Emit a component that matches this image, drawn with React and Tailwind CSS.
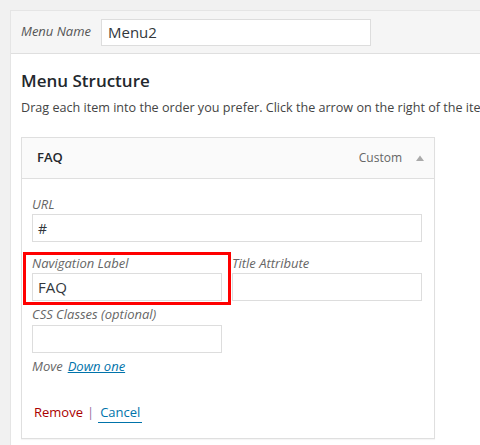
export default function App() {
  const font = { fontFamily: '"Open Sans", "Noto Sans", sans-serif' };
  return (
    <div className="w-[480px] h-[445px] overflow-hidden bg-[#f1f1f1] pt-[10px] pl-[10px]" style={font}>
      <div className="w-[520px] h-[460px] border border-[#e5e5e5] bg-white">
        {/* header */}
        <div className="h-[43px] bg-[#f5f5f5] border-b border-[#dfdfdf] flex items-center pl-[10px]">
          <span className="text-[13px] italic text-[#555] w-[80px]">Menu Name</span>
          <div className="w-[270px] h-[27px] border border-[#ddd] bg-white flex items-center pl-[6px] text-[15px] text-[#32373c]">
            Menu2
          </div>
        </div>
        {/* body */}
        <div className="pl-[10px]">
          <div className="mt-[14px] h-[26px] flex items-center text-[17px] font-semibold text-[#23282d]">Menu Structure</div>
          <div className="mt-[5px] h-[18px] flex items-center text-[12.6px] text-[#444] whitespace-nowrap">
            Drag each item into the order you prefer. Click the arrow on the right of the item to reveal additional configuration options.
          </div>
          {/* item */}
          <div className="mt-[20px] w-[414px] border border-[#dfdfdf] bg-white shadow-[0_1px_1px_rgba(0,0,0,0.04)]">
            <div className="h-[41px] bg-[#fafafa] border-b border-[#dfdfdf] flex items-center pl-[15px] pr-[9px]">
              <span className="text-[13px] font-semibold text-[#23282d]">FAQ</span>
              <span className="ml-auto text-[12px] text-[#666]">Custom</span>
              <svg width="10" height="8" viewBox="0 0 10 8" className="ml-[13px]">
                <path d="M1 7 L5 1.5 L9 7 Z" fill="#aaa" />
              </svg>
            </div>
            <div className="pl-[10px] pr-[12px] pt-[17px] pb-[16px]">
              <div className="h-[18px] flex items-center text-[13px] italic text-[#666]">URL</div>
              <div className="w-[390px] h-[28px] border border-[#ddd] flex items-center pl-[5px] text-[14px] text-[#32373c]">#</div>
              <div className="mt-[13px] flex gap-[10px]">
                <div className="relative w-[190px]">
                  <div className="h-[18px] flex items-center text-[13px] italic text-[#666]">Navigation Label</div>
                  <div className="w-[190px] h-[28px] border border-[#ddd] flex items-center pl-[5px] text-[15px] text-[#32373c]">FAQ</div>
                  <div className="absolute left-[-9px] top-[-3px] w-[208px] h-[53px] border-[3px] border-[#ff0000]" />
                </div>
                <div className="w-[190px]">
                  <div className="h-[18px] flex items-center text-[13px] italic text-[#666]">Title Attribute</div>
                  <div className="w-[190px] h-[28px] border border-[#ddd]" />
                </div>
              </div>
              <div className="mt-[5px] h-[18px] flex items-center text-[13px] italic text-[#666]">CSS Classes (optional)</div>
              <div className="mt-[1px] w-[190px] h-[28px] border border-[#ddd]" />
              <div className="mt-[5px] h-[18px] flex items-center text-[13px] italic text-[#666]">
                Move
                <span className="ml-[5px] text-[#0073aa] underline">Down one</span>
              </div>
              <div className="mt-[28px] h-[18px] flex items-center text-[13px] pl-[2px]">
                <span className="text-[#a00]">Remove</span>
                <span className="mx-[4px] text-[#9b6fa0]">|</span>
                <span className="text-[#0073aa] border-b border-[#0073aa] px-[2px]">Cancel</span>
              </div>
            </div>
          </div>
        </div>
      </div>
    </div>
  );
}
